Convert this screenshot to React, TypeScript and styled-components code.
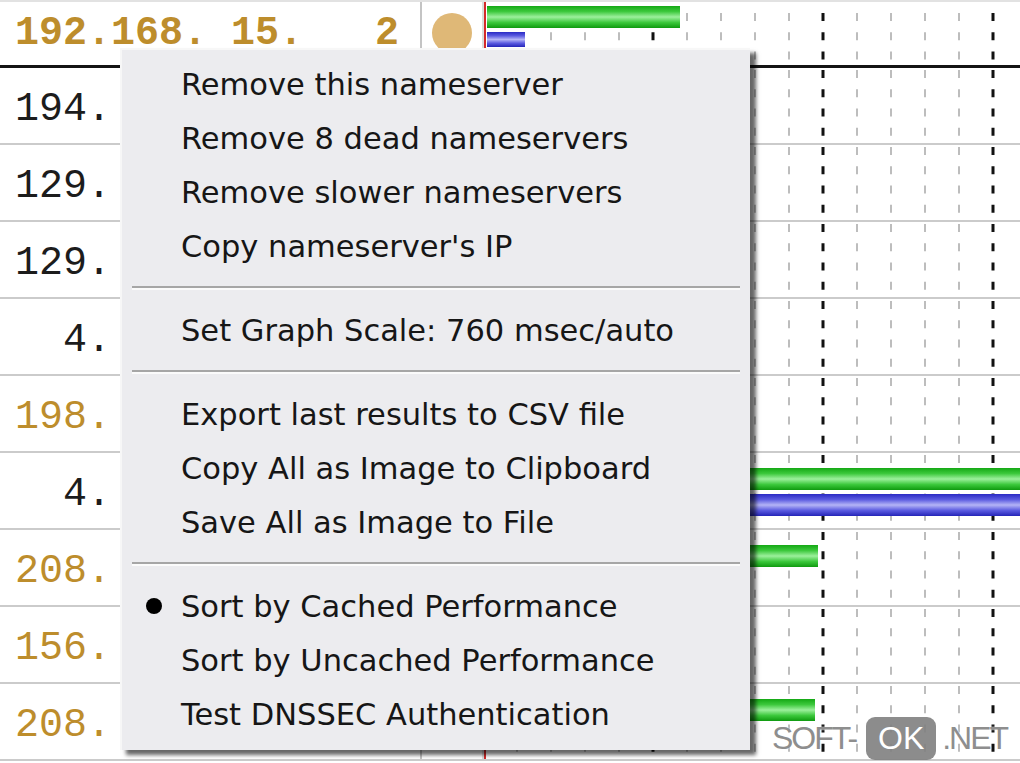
import React from 'react';
import styled, { createGlobalStyle } from 'styled-components';

type BarKind = 'cached' | 'uncached';

interface Bar {
  kind: BarKind;
  top: number;
  height: number;
  length: number;
}

interface Server {
  ip: string;
  tone: 'black' | 'gold';
  bars: Bar[];
}

const GRAPH_WIDTH = 534;
const DASH_PERIOD = 19.25;

const current: Server = {
  ip: '192.168. 15.   2',
  tone: 'gold',
  bars: [
    { kind: 'cached', top: 4, height: 22, length: 193 },
    { kind: 'uncached', top: 30, height: 15, length: 38 },
  ],
};

const servers: Server[] = [
  { ip: '194.', tone: 'black', bars: [{ kind: 'cached', top: 15, height: 22, length: 210 }] },
  { ip: '129.', tone: 'black', bars: [{ kind: 'cached', top: 15, height: 22, length: 230 }] },
  { ip: '129.', tone: 'black', bars: [{ kind: 'cached', top: 15, height: 22, length: 240 }] },
  { ip: '  4.', tone: 'black', bars: [{ kind: 'cached', top: 15, height: 22, length: 250 }] },
  { ip: '198.', tone: 'gold', bars: [{ kind: 'cached', top: 15, height: 22, length: 260 }] },
  {
    ip: '  4.',
    tone: 'black',
    bars: [
      { kind: 'cached', top: 15, height: 22, length: GRAPH_WIDTH },
      { kind: 'uncached', top: 41, height: 22, length: GRAPH_WIDTH },
    ],
  },
  { ip: '208.', tone: 'gold', bars: [{ kind: 'cached', top: 15, height: 22, length: 331 }] },
  { ip: '156.', tone: 'gold', bars: [{ kind: 'cached', top: 15, height: 22, length: 250 }] },
  { ip: '208.', tone: 'gold', bars: [{ kind: 'cached', top: 15, height: 22, length: 328 }] },
];

type MenuEntry = { label: string; checked?: boolean } | 'separator';

const menu: MenuEntry[] = [
  { label: 'Remove this nameserver' },
  { label: 'Remove 8 dead nameservers' },
  { label: 'Remove slower nameservers' },
  { label: "Copy nameserver's IP" },
  'separator',
  { label: 'Set Graph Scale: 760 msec/auto' },
  'separator',
  { label: 'Export last results to CSV file' },
  { label: 'Copy All as Image to Clipboard' },
  { label: 'Save All as Image to File' },
  'separator',
  { label: 'Sort by Cached Performance', checked: true },
  { label: 'Sort by Uncached Performance' },
  { label: 'Test DNSSEC Authentication' },
];

const GlobalStyle = createGlobalStyle`
  html, body {
    margin: 0;
    padding: 0;
    background: #fff;
    overflow: hidden;
  }
`;

/**
 * Graph cell drawing: dashed scale lines and the timing bars
 */
const Graph: React.FC<{ height: number; phase: number; bars: Bar[] }> = ({
  height,
  phase,
  bars,
}) => {
  const lines = Array.from({ length: 15 }, (_, i) => i + 1);

  return (
    <svg width={GRAPH_WIDTH} height={height} style={{ display: 'block' }}>
      <defs>
        <linearGradient id="g-cached" x1="0" y1="0" x2="0" y2="1">
          <stop offset="0" stopColor="#14a814" />
          <stop offset="0.25" stopColor="#3cc83c" />
          <stop offset="0.5" stopColor="#9cf09c" />
          <stop offset="0.75" stopColor="#3cc83c" />
          <stop offset="1" stopColor="#0f9a0f" />
        </linearGradient>
        <linearGradient id="g-uncached" x1="0" y1="0" x2="0" y2="1">
          <stop offset="0" stopColor="#2a2ac4" />
          <stop offset="0.25" stopColor="#5a5ae0" />
          <stop offset="0.5" stopColor="#b4b4f6" />
          <stop offset="0.75" stopColor="#5a5ae0" />
          <stop offset="1" stopColor="#2424b8" />
        </linearGradient>
      </defs>
      {lines.map((i) => {
        const major = i % 5 === 0;
        const x = 34 * i - 3;
        return (
          <line
            key={i}
            x1={x}
            x2={x}
            y1={0}
            y2={height}
            stroke={major ? '#111' : '#bdbdbd'}
            strokeWidth={major ? 3 : 2}
            strokeDasharray={`8 ${DASH_PERIOD - 8}`}
            strokeDashoffset={phase}
          />
        );
      })}
      {bars.map((b, i) => (
        <rect
          key={i}
          x={1}
          y={b.top}
          width={b.length}
          height={b.height}
          fill={`url(#g-${b.kind})`}
        />
      ))}
    </svg>
  );
};

const App: React.FC = () => {
  return (
    <Screen>
      <GlobalStyle />
      <Table>
        <Row $head>
          <IpCell $tone={current.tone} $bold>
            {current.ip}
          </IpCell>
          <DotCell>
            <Dot />
          </DotCell>
          <GraphCell>
            <Graph height={63} phase={8.25} bars={current.bars} />
          </GraphCell>
        </Row>
        {servers.map((s, i) => (
          <Row key={i}>
            <IpCell $tone={s.tone}>{s.ip}</IpCell>
            <DotCell />
            <GraphCell>
              <Graph height={75} phase={17.25} bars={s.bars} />
            </GraphCell>
          </Row>
        ))}
      </Table>

      <ContextMenu>
        {menu.map((entry, i) =>
          entry === 'separator' ? (
            <Separator key={i}>
              <SeparatorLine />
            </Separator>
          ) : (
            <MenuItem key={i}>
              <Mark>{entry.checked && <Bullet />}</Mark>
              <span>{entry.label}</span>
            </MenuItem>
          ),
        )}
      </ContextMenu>

      <Watermark>
        <span>SOFT-</span>
        <Badge>OK</Badge>
        <span>.NET</span>
      </Watermark>
    </Screen>
  );
};

const Screen = styled.div`
  position: relative;
  width: 1020px;
  height: 763px;
  overflow: hidden;
  background: #fff;
`;

const Table = styled.div`
  display: flex;
  flex-direction: column;
`;

const Row = styled.div<{ $head?: boolean }>`
  display: flex;
  height: ${({ $head }) => ($head ? '62px' : '75px')};
  border-top: ${({ $head }) => ($head ? '2px solid #e2e2e2' : 'none')};
  border-bottom: ${({ $head }) =>
    $head ? '3px solid #141414' : '2px solid #cbcbcb'};
  padding-bottom: ${({ $head }) => ($head ? '1px' : '0')};
`;

const IpCell = styled.div<{ $tone: 'black' | 'gold'; $bold?: boolean }>`
  width: 405px;
  padding-left: 15px;
  display: flex;
  align-items: center;
  padding-top: ${({ $bold }) => ($bold ? '1px' : '8px')};
  box-sizing: content-box;
  border-right: 2px solid #c4c4c4;
  white-space: pre;
  font-family: 'Liberation Mono', 'Courier New', monospace;
  font-size: 40px;
  font-weight: ${({ $bold }) => ($bold ? 700 : 400)};
  color: ${({ $tone }) => ($tone === 'gold' ? '#bd8d2c' : '#1c1c1c')};
`;

const DotCell = styled.div`
  width: 60px;
  display: flex;
  align-items: center;
  justify-content: center;
  border-right: 2px solid #dcdcdc;
`;

const Dot = styled.div`
  width: 40px;
  height: 40px;
  border-radius: 50%;
  background: #dfb877;
`;

const GraphCell = styled.div`
  flex: 1;
  border-left: 2px solid #d42a2a;
  overflow: hidden;
`;

const ContextMenu = styled.div`
  position: absolute;
  left: 120px;
  top: 48px;
  width: 630px;
  padding: 7px 0 9px;
  box-sizing: border-box;
  background: #ececef;
  border-left: 2px solid #f7f7f7;
  border-top: 2px solid #f7f7f7;
  box-shadow: 6px 5px 4px rgba(0, 0, 0, 0.6);
  font-family: 'DejaVu Sans', Tahoma, sans-serif;
  font-size: 30.5px;
  color: #161616;
`;

const MenuItem = styled.div`
  display: grid;
  grid-template-columns: 59px 1fr;
  align-items: center;
  height: 54px;
  white-space: nowrap;
`;

const Mark = styled.div`
  display: flex;
  align-items: center;
  padding-left: 24px;
`;

const Bullet = styled.div`
  width: 16px;
  height: 16px;
  border-radius: 50%;
  background: #000;
`;

const Separator = styled.div`
  height: 30px;
  display: flex;
  align-items: center;
  margin: 0 10px 0 10px;
`;

const SeparatorLine = styled.div`
  flex: 1;
  border-top: 2px solid #a6a6a6;
  border-bottom: 2px solid #fbfbfb;
`;

const Watermark = styled.div`
  position: absolute;
  left: 772px;
  top: 717px;
  display: flex;
  align-items: center;
  font-family: 'Liberation Sans', Arial, sans-serif;
  font-size: 32px;
  letter-spacing: -2px;
  color: #8e8e8e;
  text-shadow: 0 0 2px #fff;
`;

const Badge = styled.span`
  display: flex;
  align-items: center;
  justify-content: center;
  width: 70px;
  height: 43px;
  margin: 0 6px 0 10px;
  border-radius: 9px;
  background: rgba(128, 128, 128, 0.9);
  color: #fff;
  letter-spacing: 0;
  text-shadow: none;
`;

export default App;
